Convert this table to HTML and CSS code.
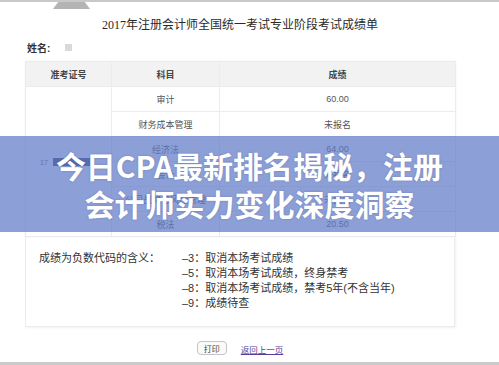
FILE: index.html
```html
<!DOCTYPE html>
<html lang="zh">
<head>
<meta charset="utf-8">
<title>2017年注册会计师成绩单</title>
<link rel="stylesheet" href="styles.css">
</head>
<body>
<div class="page">
  <div class="tab-arrow"></div>
  <div class="content">
    <h1 class="title">2017年注册会计师全国统一考试专业阶段考试成绩单</h1>
    <div class="name-row"><span class="name-label">姓名:</span><span class="name-mask"></span></div>
    <table class="score-table">
      <colgroup><col class="c1"><col class="c2"><col class="c3"></colgroup>
      <thead>
        <tr><th>准考证号</th><th>科目</th><th>成绩</th></tr>
      </thead>
      <tbody>
        <tr><td rowspan="6" class="id-cell"><span class="id-num">17</span><span class="id-mask"></span></td><td>审计</td><td>60.00</td></tr>
        <tr><td>财务成本管理</td><td>未报名</td></tr>
        <tr><td>经济法</td><td>64.00</td></tr>
        <tr><td>会计</td><td>未报名</td></tr>
        <tr><td>公司战略与风险管理</td><td>未报名</td></tr>
        <tr><td>税法</td><td>20.50</td></tr>
      </tbody>
    </table>
    <div class="notes">
      <div class="notes-label">成绩为负数代码的含义：</div>
      <ul class="notes-list">
        <li>–3：取消本场考试成绩</li>
        <li>–5：取消本场考试成绩，终身禁考</li>
        <li>–8：取消本场考试成绩，禁考5年(不含当年)</li>
        <li>–9：成绩待查</li>
      </ul>
    </div>
    <div class="actions">
      <button class="print-btn" type="button">打印</button>
      <a class="back-link" href="#">返回上一页</a>
    </div>
  </div>
  <div class="bottom-line"></div>
  <div class="banner">
    <p class="banner-text">今日CPA最新排名揭秘，注册<br>会计师实力变化深度洞察</p>
  </div>
</div>
</body>
</html>
```

FILE: styles.css
```css
* { box-sizing: border-box; }
html, body { margin: 0; padding: 0; background: #fff; }
body {
  font-family: "Liberation Sans", "Noto Sans CJK SC", sans-serif;
  color: #333;
}
.page {
  position: relative;
  width: 499px;
  height: 365px;
  overflow: hidden;
  border-top: 2px solid #c9c9c9;
  display: flex;
  flex-direction: column;
}
.tab-arrow {
  width: 37px;
  height: 7px;
  margin-left: 53px;
  background: #b4b4b4;
  clip-path: polygon(14% 0, 86% 0, 100% 100%, 0 100%);
  flex: none;
}
.content {
  margin-left: 25px;
  width: 430px;
}
.title {
  margin: 8px 0 0;
  font-family: "Liberation Serif", "Noto Sans CJK SC", serif;
  font-weight: normal;
  font-size: 12px;
  line-height: 16px;
  text-align: center;
  color: #2a2a2a;
}
.name-row {
  margin-top: 7px;
  padding-left: 2px;
  height: 14px;
  display: flex;
  align-items: center;
}
.name-label {
  font-size: 10px;
  font-weight: bold;
  color: #333;
}
.name-mask {
  width: 7px;
  height: 7px;
  background: #d9d9d9;
  margin-left: 15px;
}
.score-table {
  margin-top: 7px;
  width: 430px;
  border-collapse: collapse;
  table-layout: fixed;
  font-size: 9px;
  color: #555;
  box-shadow: 0 0 2px rgba(0,0,0,0.06);
}
.c1 { width: 86px; }
.c2 { width: 108px; }
.c3 { width: 236px; }
.score-table th {
  height: 25px;
  background: #f2f2f2;
  font-weight: bold;
  color: #444;
  border: 1px solid #ececec;
  padding: 0;
}
.score-table td {
  height: 25px;
  text-align: center;
  border: 1px solid #ececec;
  padding: 0;
}
.score-table td.id-cell {
  text-align: left;
  padding-left: 14px;
}
.id-num {
  font-size: 7px;
  color: #666;
  vertical-align: middle;
}
.id-mask {
  display: inline-block;
  width: 37px;
  height: 8px;
  margin-left: 5px;
  background: #40476e;
  vertical-align: middle;
}
.notes {
  display: flex;
  padding: 14px 13px 15px;
  border: 1px solid #ececec;
  border-top: none;
  box-shadow: 1px 1px 2px rgba(0,0,0,0.06);
  font-size: 11px;
  line-height: 15px;
  color: #333;
}
.notes-label { width: 143px; flex: none; }
.notes-list { list-style: none; margin: 0; padding: 0; }
.actions {
  margin-top: 14px;
  display: flex;
  justify-content: center;
  align-items: center;
  gap: 14px;
}
.print-btn {
  width: 30px;
  height: 14px;
  padding: 0;
  font-family: inherit;
  font-size: 8px;
  color: #444;
  background: #fafafa;
  border: 1px solid #c4c4c4;
  border-radius: 4px;
}
.back-link {
  font-size: 8.5px;
  color: #5a3d96;
  text-decoration: underline;
  margin-top: 2px;
}
.bottom-line {
  margin-top: auto;
  height: 3px;
  background: #cacaca;
  flex: none;
}
.banner {
  position: absolute;
  left: 0;
  right: 0;
  top: 134px;
  height: 96px;
  background: rgba(95, 122, 200, 0.72);
  display: flex;
  align-items: center;
  justify-content: center;
}
.banner-text {
  margin: 0;
  text-align: center;
  font-family: "Noto Sans CJK SC", sans-serif;
  font-weight: bold;
  font-size: 30px;
  line-height: 38px;
  color: #fff;
  text-shadow: 0 0 2px rgba(40, 50, 90, 0.3);
}
```
